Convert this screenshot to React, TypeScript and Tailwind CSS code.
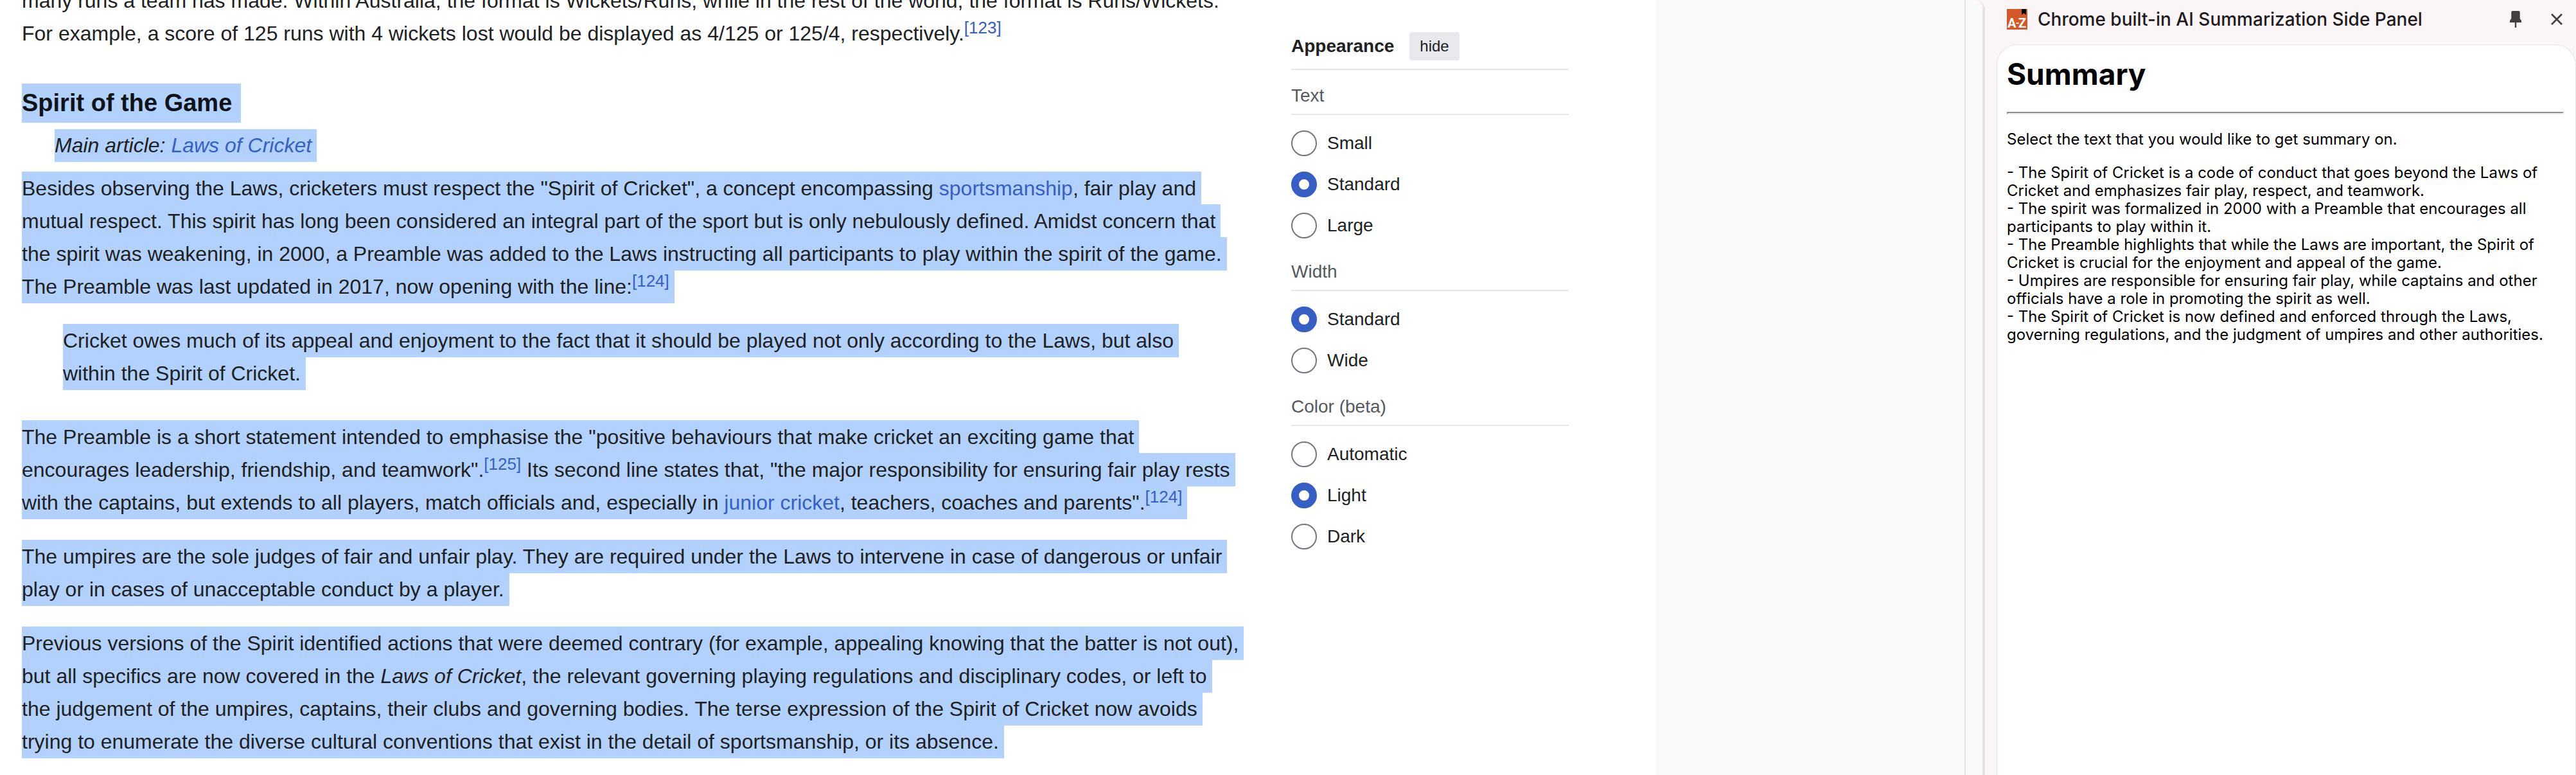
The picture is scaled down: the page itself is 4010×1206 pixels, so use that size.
import React, { useState } from "react";
import type { ReactNode } from "react";

function Selected({ children }: { children: ReactNode }) {
  return (
    <span className="box-decoration-clone bg-[#b2d2fd] pt-2 pr-2 pb-2">{children}</span>
  );
}

function WikiLink({ children }: { children: ReactNode }) {
  return (
    <a href="#" className="text-[#355fc4]">
      {children}
    </a>
  );
}

function Cite({ n }: { n: number }) {
  return (
    <sup className="static align-[11px] text-[26px] leading-0">
      <WikiLink>[{n}]</WikiLink>
    </sup>
  );
}

function Article() {
  return (
    <article className="-mt-6 min-w-0 flex-1 text-[32px] leading-[51px] text-[#202122]">
      <p>
        many runs a team has made. Within Australia, the format is Wickets/Runs, while in the rest of
        the world, the format is Runs/Wickets. For example, a score of 125 runs with 4 wickets lost
        would be displayed as 4/125 or 125/4, respectively.
        <Cite n={123} />
      </p>
      <h3 className="mt-[52px] w-fit bg-[#b2d2fd] pr-[14px] text-[38px] leading-[61px] font-bold text-[#101418]">
        Spirit of the Game
      </h3>
      <p className="mt-[10px] ml-[51px] w-fit bg-[#b2d2fd] pr-2 italic">
        Main article: <WikiLink>Laws of Cricket</WikiLink>
      </p>
      <p className="mt-4">
        <Selected>
          Besides observing the Laws, cricketers must respect the "Spirit of Cricket", a concept
          encompassing <WikiLink>sportsmanship</WikiLink>, fair play and mutual respect. This spirit
          has long been considered an integral part of the sport but is only nebulously defined.
          Amidst concern that the spirit was weakening, in 2000, a Preamble was added to the Laws
          instructing all participants to play within the spirit of the game. The Preamble was last
          updated in 2017, now opening with the line:
          <Cite n={124} />
        </Selected>
      </p>
      <blockquote className="mt-[33px] mr-16 ml-16">
        <Selected>
          Cricket owes much of its appeal and enjoyment to the fact that it should be played not only
          according to the Laws, but also within the Spirit of Cricket.
        </Selected>
      </blockquote>
      <p className="mt-12">
        <Selected>
          The Preamble is a short statement intended to emphasise the "positive behaviours that make
          cricket an exciting game that encourages leadership, friendship, and teamwork".
          <Cite n={125} /> Its second line states that, "the major responsibility for ensuring fair
          play rests with the captains, but extends to all players, match officials and, especially
          in <WikiLink>junior cricket</WikiLink>, teachers, coaches and parents".
          <Cite n={124} />
        </Selected>
      </p>
      <p className="mt-[33px]">
        <Selected>
          The umpires are the sole judges of fair and unfair play. They are required under the Laws to
          intervene in case of dangerous or unfair play or in cases of unacceptable conduct by a
          player.
        </Selected>
      </p>
      <p className="mt-[33px]">
        <Selected>
          Previous versions of the Spirit identified actions that were deemed contrary (for example,
          appealing knowing that the batter is not out), but all specifics are now covered in the{" "}
          <i>Laws of Cricket</i>, the relevant governing playing regulations and disciplinary codes,
          or left to the&nbsp;judgement of the umpires, captains, their clubs and governing bodies.
          The terse expression of the Spirit of Cricket now avoids trying to enumerate the diverse
          cultural conventions that exist in the detail of sportsmanship, or its absence.
        </Selected>
      </p>
    </article>
  );
}

const settings = [
  { title: "Text", options: ["Small", "Standard", "Large"], initial: "Standard" },
  { title: "Width", options: ["Standard", "Wide"], initial: "Standard" },
  { title: "Color (beta)", options: ["Automatic", "Light", "Dark"], initial: "Light" },
];

function SettingGroup({ title, options, initial }: (typeof settings)[number]) {
  const [value, setValue] = useState(initial);
  return (
    <fieldset className="pb-3">
      <legend className="w-full border-b-2 border-[#e7e8ed] pt-5 pb-2 leading-10 text-[#54595d]">
        {title}
      </legend>
      <div className="flex flex-col gap-6 pt-6">
        {options.map((option) => (
          <label key={option} className="flex items-center gap-4">
            <input
              type="radio"
              name={title}
              checked={value === option}
              onChange={() => setValue(option)}
              className="size-10 appearance-none rounded-full border-2 border-[#72777d] bg-white checked:border-12 checked:border-[#355fc4]"
            />
            {option}
          </label>
        ))}
      </div>
    </fieldset>
  );
}

function Appearance() {
  return (
    <aside className="w-[432px] shrink-0 pt-[50px] text-[28px] leading-10 text-[#202122]">
      <div className="flex items-center gap-6 border-b-2 border-[#e7e8ed] pb-[13px]">
        <h2 className="font-bold">Appearance</h2>
        <button type="button" className="h-11 rounded-sm bg-[#e8e9ed] px-4 text-2xl leading-8">
          hide
        </button>
      </div>
      {settings.map((s) => (
        <SettingGroup key={s.title} {...s} />
      ))}
    </aside>
  );
}

function ExtensionLogo() {
  return (
    <svg viewBox="0 0 32 32" className="size-8" role="img" aria-label="A-Z">
      <rect width="32" height="32" fill="#d35a28" />
      <path d="M23 0h7v9l-3.500-2.500L23 9z" fill="#000" />
      <g fill="#fff" fontFamily="Roboto, sans-serif" fontWeight="700" fontSize="20">
        <text x="1" y="29">A</text>
        <text x="14" y="27" fontSize="14">-</text>
        <text x="18" y="29">Z</text>
      </g>
    </svg>
  );
}

const bullets = [
  "The Spirit of Cricket is a code of conduct that goes beyond the Laws of Cricket and emphasizes fair play, respect, and teamwork.",
  "The spirit was formalized in 2000 with a Preamble that encourages all participants to play within it.",
  "The Preamble highlights that while the Laws are important, the Spirit of Cricket is crucial for the enjoyment and appeal of the game.",
  "Umpires are responsible for ensuring fair play, while captains and other officials have a role in promoting the spirit as well.",
  "The Spirit of Cricket is now defined and enforced through the Laws, governing regulations, and the judgment of umpires and other authorities.",
];

function SidePanel() {
  return (
    <section className="flex w-[920px] shrink-0 flex-col font-['Inter',sans-serif]">
      <header className="flex h-[69px] items-center pr-[21px] pb-[9px] pl-[34px]">
        <ExtensionLogo />
        <h2 className="ml-4 flex-1 text-[28px] leading-9 font-medium text-[#1f1a1d]">
          Chrome built-in AI Summarization Side Panel
        </h2>
        <button type="button" aria-label="Pin" className="mr-[46px]">
          <svg viewBox="0 0 18 26" className="h-[26px] w-[18px]" fill="#443e42">
            <path d="M4.300 0h9.400a2 2 0 0 1 2 2v10l2.300 3v3H10.200v8H7.800v-8H0v-3l2.300-3V2a2 2 0 0 1 2-2z" />
          </svg>
        </button>
        <button type="button" aria-label="Close">
          <svg viewBox="0 0 18 18" className="size-[18px]" stroke="#443e42" strokeWidth="2.600">
            <path d="M1 1l16 16M17 1L1 17" />
          </svg>
        </button>
      </header>
      <div className="ml-[18px] flex-1 rounded-t-4xl border border-b-0 border-[#ebe0ea] bg-white pt-[17px] pr-[18px] pl-[15px] text-2xl leading-7 text-black">
        <h1 className="text-[46px] leading-14 font-bold">Summary</h1>
        <hr className="mt-[31px] h-1 border-2 border-t-[#8e8e8e] border-r-[#ececec] border-b-[#ececec] border-l-[#8e8e8e]" />
        <p className="mt-[25px]">Select the text that you would like to get summary on.</p>
        <div className="mt-6">
          {bullets.map((b) => (
            <p key={b}>- {b}</p>
          ))}
        </div>
      </div>
    </section>
  );
}

export default function App() {
  return (
    <div className="flex h-screen overflow-hidden bg-[#fbf5f8] font-['Liberation_Sans',Arial,sans-serif]">
      <div className="flex min-w-0 flex-1 overflow-hidden rounded-tr-2xl border-r-2 border-[#e8dae6] bg-[#f8f9fa]">
        <main className="flex max-w-[2578px] min-w-0 flex-1 gap-[73px] bg-white pr-[136px] pl-[34px]">
          <Article />
          <Appearance />
        </main>
        <div className="ml-auto w-[30px] shrink-0 border-r-2 border-l-2 border-r-[#e5e5e5] border-l-[#e2e5e8] bg-[#fafafa]" />
      </div>
      <SidePanel />
    </div>
  );
}
